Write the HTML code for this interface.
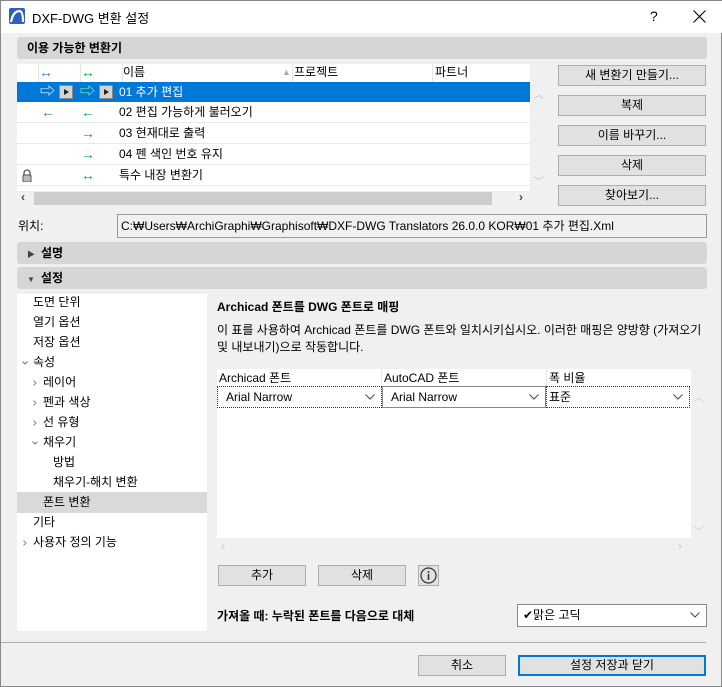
<!DOCTYPE html>
<html><head><meta charset="utf-8"><style>
*{box-sizing:border-box;margin:0;padding:0}
body{width:722px;height:687px;background:#f0f0f0;font-family:"Liberation Sans","Noto Sans CJK KR",sans-serif;font-size:12px;color:#000;position:relative;overflow:hidden;border:1px solid #888}
.a{position:absolute}
.bar{position:absolute;left:16px;width:690px;height:22px;background:#d6d6d6;border-radius:3px;font-weight:bold;line-height:22px;padding-left:10px}
.btn{position:absolute;background:#e1e1e1;border:1px solid #adadad;text-align:center;line-height:18px;font-size:12px}
.row{position:absolute;left:16px;width:513px;height:21px;border-bottom:1px solid #e8e8e8;line-height:20px}
.t{position:absolute;left:0;width:190px;height:20px;line-height:20px}
.bl{color:#2a7ae2;font-size:14px}.gr{color:#1aa33a;font-size:14px}
.dd{position:absolute;height:22px;background:#fff;line-height:20px;padding-left:8px}
.chev{position:absolute;right:6px;top:7px}
.pb{position:absolute;top:3px;width:14px;height:14px;background:#d4d4d4;border:1px solid #888}
</style></head><body>
<div class="a" style="left:0;top:0;width:722px;height:32px;background:#fff"></div>
<svg class="a" style="left:8px;top:6px" width="16" height="18" viewBox="0 0 16 18"><rect x="0" y="1" width="16" height="16" rx="2" fill="#2d5fc0"/><path d="M2 15 Q4 4 11 4 Q14 5 14 15" stroke="#fff" stroke-width="2.2" fill="none"/></svg>
<div class="a" style="left:31px;top:7px;font-size:13px">DXF-DWG 변환 설정</div>
<div class="a" style="left:649px;top:7px;font-size:14px">?</div>
<svg class="a" style="left:692px;top:9px" width="13" height="13"><path d="M0.5 0.5L12.5 12.5M12.5 0.5L0.5 12.5" stroke="#000" stroke-width="1.1"/></svg>

<div class="bar" style="top:36px">이용 가능한 변환기</div>
<div class="a" style="left:16px;top:63px;width:513px;height:127px;background:#fff"></div>
<div class="a" style="left:16px;top:63px;width:513px;height:18px;line-height:17px">
 <span class="a bl" style="left:22px">↔</span><span class="a gr" style="left:64px">↔</span>
 <span class="a" style="left:106px">이름</span><span class="a" style="left:265px;color:#aaa;font-size:9px">▲</span>
 <span class="a" style="left:277px">프로젝트</span><span class="a" style="left:418px">파트너</span>
 <div class="a" style="left:21px;top:0;width:1px;height:18px;background:#e5e5e5"></div>
 <div class="a" style="left:63px;top:0;width:1px;height:18px;background:#e5e5e5"></div>
 <div class="a" style="left:105px;top:0;width:1px;height:18px;background:#e5e5e5"></div>
 <div class="a" style="left:275px;top:0;width:1px;height:18px;background:#e5e5e5"></div>
 <div class="a" style="left:415px;top:0;width:1px;height:18px;background:#e5e5e5"></div>
</div>
<div class="row" style="top:81px;height:20px;background:#0078d7;color:#fff;border:0">
 <span class="a" style="left:23px;font-size:15px">⇨</span><span class="pb" style="left:42px"><svg width="12" height="12" style="position:absolute;left:0;top:0"><path d="M4 3L9 6L4 9Z" fill="#222"/></svg></span>
 <span class="a" style="left:63px;color:#9f9;font-size:15px">⇨</span><span class="pb" style="left:82px"><svg width="12" height="12" style="position:absolute;left:0;top:0"><path d="M4 3L9 6L4 9Z" fill="#222"/></svg></span>
 <span class="a" style="left:102px">01 추가 편집</span></div>
<div class="row" style="top:101px"><span class="a bl" style="left:24px">←</span><span class="a gr" style="left:64px">←</span><span class="a" style="left:102px">02 편집 가능하게 불러오기</span></div>
<div class="row" style="top:122px"><span class="a gr" style="left:64px">→</span><span class="a" style="left:102px">03 현재대로 출력</span></div>
<div class="row" style="top:143px"><span class="a gr" style="left:64px">→</span><span class="a" style="left:102px">04 펜 색인 번호 유지</span></div>
<div class="row" style="top:164px"><svg class="a" style="left:5px;top:4px" width="10" height="13"><path d="M2 6V4a3 3 0 0 1 6 0v2" stroke="#555" fill="none" stroke-width="1.3"/><rect x="1" y="6" width="8" height="7" rx="1" fill="#bbb" stroke="#555"/></svg><span class="a gr" style="left:64px">↔</span><span class="a" style="left:102px">특수 내장 변환기</span></div>
<div class="a" style="left:16px;top:190px;width:513px;height:15px;background:#f0f0f0"></div>
<div class="a" style="left:20px;top:189px;font-weight:bold;color:#444">‹</div>
<div class="a" style="left:33px;top:191px;width:458px;height:13px;background:#cdcdcd"></div>
<div class="a" style="left:518px;top:189px;font-weight:bold;color:#444">›</div>
<div class="a" style="left:533px;top:85px;color:#bbb;font-size:10px">︿</div>
<div class="a" style="left:533px;top:172px;color:#bbb;font-size:10px">﹀</div>

<div class="btn" style="left:557px;top:64px;width:148px;height:21px">새 변환기 만들기...</div>
<div class="btn" style="left:557px;top:94px;width:148px;height:21px">복제</div>
<div class="btn" style="left:557px;top:124px;width:148px;height:21px">이름 바꾸기...</div>
<div class="btn" style="left:557px;top:154px;width:148px;height:21px">삭제</div>
<div class="btn" style="left:557px;top:184px;width:148px;height:21px">찾아보기...</div>

<div class="a" style="left:17px;top:216px">위치:</div>
<div class="a" style="left:116px;top:213px;width:590px;height:24px;border:1px solid #999;background:#f0f0f0;line-height:22px;padding-left:3px">C:₩Users₩ArchiGraphi₩Graphisoft₩DXF-DWG Translators 26.0.0 KOR₩01 추가 편집.Xml</div>

<div class="bar" style="top:241px"><span style="font-size:8px;color:#444;margin-right:6px">▶</span>설명</div>
<div class="bar" style="top:266px"><span style="font-size:8px;color:#444;margin-right:6px">▼</span>설정</div>

<div class="a" style="left:16px;top:293px;width:190px;height:337px;background:#fff">
 <div class="t" style="top:-2px;padding-left:16px">도면 단위</div>
 <div class="t" style="top:18px;padding-left:16px">열기 옵션</div>
 <div class="t" style="top:38px;padding-left:16px">저장 옵션</div>
 <div class="t" style="top:58px;padding-left:16px"><svg class="a" style="left:5px;top:9px" width="6" height="4"><path d="M0.5 0.5L3 3L5.5 0.5" stroke="#777" fill="none"/></svg>속성</div>
 <div class="t" style="top:78px;padding-left:26px"><svg class="a" style="left:16px;top:8px" width="4" height="6"><path d="M0.5 0.5L3 3L0.5 5.5" stroke="#888" fill="none"/></svg>레이어</div>
 <div class="t" style="top:98px;padding-left:26px"><svg class="a" style="left:16px;top:8px" width="4" height="6"><path d="M0.5 0.5L3 3L0.5 5.5" stroke="#888" fill="none"/></svg>펜과 색상</div>
 <div class="t" style="top:118px;padding-left:26px"><svg class="a" style="left:16px;top:8px" width="4" height="6"><path d="M0.5 0.5L3 3L0.5 5.5" stroke="#888" fill="none"/></svg>선 유형</div>
 <div class="t" style="top:138px;padding-left:26px"><svg class="a" style="left:15px;top:9px" width="6" height="4"><path d="M0.5 0.5L3 3L5.5 0.5" stroke="#777" fill="none"/></svg>채우기</div>
 <div class="t" style="top:158px;padding-left:36px">방법</div>
 <div class="t" style="top:178px;padding-left:36px">채우기-해치 변환</div>
 <div class="t" style="top:198px;padding-left:26px;background:#d9d9d9;height:21px">폰트 변환</div>
 <div class="t" style="top:218px;padding-left:16px">기타</div>
 <div class="t" style="top:238px;padding-left:16px"><svg class="a" style="left:6px;top:8px" width="4" height="6"><path d="M0.5 0.5L3 3L0.5 5.5" stroke="#888" fill="none"/></svg>사용자 정의 기능</div>
</div>

<div class="a" style="left:216px;top:297px;font-weight:bold">Archicad 폰트를 DWG 폰트로 매핑</div>
<div class="a" style="left:216px;top:321px;width:490px;line-height:17px">이 표를 사용하여 Archicad 폰트를 DWG 폰트와 일치시키십시오. 이러한 매핑은 양방향 (가져오기 및 내보내기)으로 작동합니다.</div>

<div class="a" style="left:216px;top:368px;width:474px;height:169px;background:#fff"></div>
<div class="a" style="left:218px;top:368px">Archicad 폰트</div>
<div class="a" style="left:383px;top:368px">AutoCAD 폰트</div>
<div class="a" style="left:548px;top:368px">폭 비율</div>
<div class="a" style="left:380px;top:368px;width:1px;height:17px;background:#e5e5e5"></div>
<div class="a" style="left:545px;top:368px;width:1px;height:17px;background:#e5e5e5"></div>
<div class="dd" style="left:216px;top:385px;width:165px;border:1px dotted #333">Arial Narrow<svg class="chev" width="10" height="6"><path d="M0.5 0.5L5 5L9.5 0.5" stroke="#444" fill="none"/></svg></div>
<div class="dd" style="left:381px;top:385px;width:164px;border:1px solid #888">Arial Narrow<svg class="chev" width="10" height="6"><path d="M0.5 0.5L5 5L9.5 0.5" stroke="#444" fill="none"/></svg></div>
<div class="dd" style="left:545px;top:385px;width:144px;border:1px dotted #333;padding-left:2px">표준<svg class="chev" width="10" height="6"><path d="M0.5 0.5L5 5L9.5 0.5" stroke="#444" fill="none"/></svg></div>
<div class="a" style="left:693px;top:388px;color:#ccc;font-size:10px">︿</div>
<div class="a" style="left:693px;top:522px;color:#ccc;font-size:10px">﹀</div>
<div class="a" style="left:220px;top:538px;color:#ccc">‹</div>
<div class="a" style="left:677px;top:538px;color:#ccc">›</div>

<div class="btn" style="left:217px;top:564px;width:88px;height:21px">추가</div>
<div class="btn" style="left:317px;top:564px;width:88px;height:21px">삭제</div>
<div class="btn" style="left:417px;top:564px;width:21px;height:21px;padding-top:1px"><svg width="17" height="17"><circle cx="8.5" cy="8.5" r="7.5" fill="none" stroke="#333" stroke-width="1.2"/><circle cx="8.5" cy="5" r="1" fill="#333"/><rect x="7.7" y="7" width="1.6" height="6" fill="#333"/></svg></div>

<div class="a" style="left:216px;top:606px;font-weight:bold">가져올 때: 누락된 폰트를 다음으로 대체</div>
<div class="dd" style="left:516px;top:603px;width:190px;height:23px;border:1px solid #888;padding-left:5px">✔맑은 고딕<svg class="chev" width="10" height="6"><path d="M0.5 0.5L5 5L9.5 0.5" stroke="#444" fill="none"/></svg></div>

<div class="a" style="left:0;top:641px;width:705px;height:1px;background:#adadad"></div>
<div class="btn" style="left:417px;top:654px;width:88px;height:21px">취소</div>
<div class="btn" style="left:517px;top:654px;width:188px;height:21px;border:2px solid #0078d7;line-height:16px">설정 저장과 닫기</div>
</body></html>
